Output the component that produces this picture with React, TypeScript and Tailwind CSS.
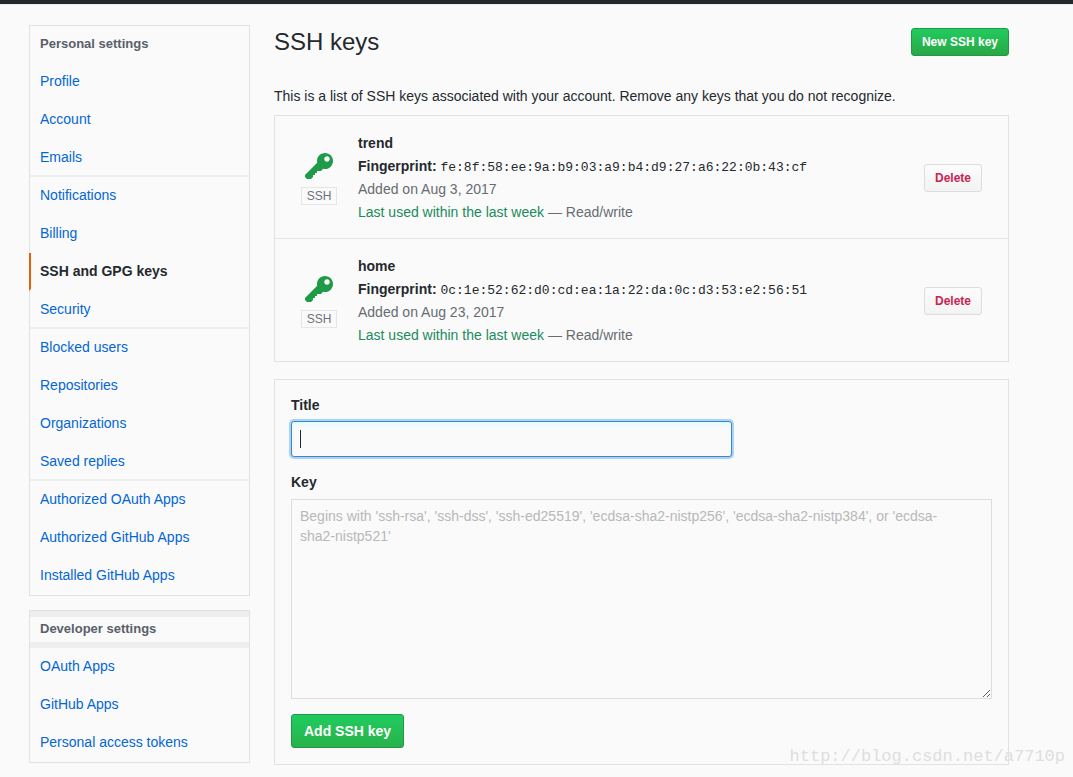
import { useState } from 'react';
import clsx from 'clsx';

interface NavItem {
  label: string;
  selected?: boolean;
  divided?: boolean;
}

interface SshKey {
  title: string;
  fingerprint: string;
  added: string;
}

const personalItems: NavItem[] = [
  { label: 'Profile' },
  { label: 'Account' },
  { label: 'Emails', divided: true },
  { label: 'Notifications' },
  { label: 'Billing' },
  { label: 'SSH and GPG keys', selected: true },
  { label: 'Security', divided: true },
  { label: 'Blocked users' },
  { label: 'Repositories' },
  { label: 'Organizations' },
  { label: 'Saved replies', divided: true },
  { label: 'Authorized OAuth Apps' },
  { label: 'Authorized GitHub Apps' },
  { label: 'Installed GitHub Apps' },
];

const developerItems: NavItem[] = [
  { label: 'OAuth Apps' },
  { label: 'GitHub Apps' },
  { label: 'Personal access tokens' },
];

const sshKeys: SshKey[] = [
  {
    title: 'trend',
    fingerprint: 'fe:8f:58:ee:9a:b9:03:a9:b4:d9:27:a6:22:0b:43:cf',
    added: 'Aug 3, 2017',
  },
  {
    title: 'home',
    fingerprint: '0c:1e:52:62:d0:cd:ea:1a:22:da:0c:d3:53:e2:56:51',
    added: 'Aug 23, 2017',
  },
];

function KeyIcon() {
  return (
    <svg viewBox="0 0 14 16" className="h-8 w-7" fill="#1f9a47" aria-hidden="true">
      <path
        fillRule="evenodd"
        d="M12.83 2.17C12.08 1.42 11.14 1.03 10 1c-1.13.03-2.08.42-2.83 1.17S6.04 3.86 6.01 5c0 .3.03.59.09.89L0 12v1l1 1h2l1-1v-1h1v-1h1v-1h2l1.09-1.11c.3.08.59.11.91.11 1.14-.03 2.08-.42 2.83-1.17S13.97 6.14 14 5c-.03-1.14-.42-2.08-1.17-2.83zM11 5.38c-.77 0-1.38-.61-1.38-1.38 0-.77.61-1.38 1.38-1.38.77 0 1.38.61 1.38 1.38 0 .77-.61 1.38-1.38 1.38z"
      />
    </svg>
  );
}

function Menu({ heading, items, banded }: { heading: string; items: NavItem[]; banded?: boolean }) {
  return (
    <nav aria-label={heading} className="border border-[#e2e2e2]">
      <h3
        className={clsx(
          'flex h-[37px] items-center px-2.5 text-[13px] font-bold text-[#586069]',
          banded && 'border-y-[6px] border-[#eeeeee]',
        )}
      >
        {heading}
      </h3>
      {items.map(item => (
        <a
          key={item.label}
          href="#"
          className={clsx(
            'flex h-[38px] items-center border-b-2 px-2.5',
            item.divided ? 'border-b-[#eeeeee]' : 'border-b-transparent',
            item.selected
              ? '-ml-px border-l-2 border-l-[#e36209] pl-[9px] font-bold text-[#24292e]'
              : 'text-[#0366d6] hover:underline',
          )}
        >
          {item.label}
        </a>
      ))}
    </nav>
  );
}

function KeyRow({ item }: { item: SshKey }) {
  return (
    <li className="flex items-center pt-4 pr-[26px] pb-[14px] pl-[26px]">
      <div className="flex w-9 flex-col items-center gap-1">
        <KeyIcon />
        <span className="w-full border border-[#e6e6e6] text-center text-xs leading-4 text-[#6a737d]">
          SSH
        </span>
      </div>
      <div className="ml-[21px] flex-1 leading-[23px] text-[#666c72]">
        <strong className="block text-[#24292e]">{item.title}</strong>
        <div className="text-[#24292e]">
          <strong>Fingerprint:</strong>{' '}
          <code className="font-['Liberation_Mono',monospace] text-[13px] leading-none">
            {item.fingerprint}
          </code>
        </div>
        <div>Added on {item.added}</div>
        <div>
          <span className="text-[#218a5b]">Last used within the last week</span> — Read/write
        </div>
      </div>
      <button
        type="button"
        className="h-7 rounded-[3px] border border-[#dddddd] bg-linear-to-b from-[#fcfcfc] to-[#f3f3f3] px-2.5 text-xs font-bold text-[#cb2450]"
      >
        Delete
      </button>
    </li>
  );
}

export default function App() {
  const [title, setTitle] = useState('');
  const [key, setKey] = useState('');

  return (
    <div className="relative min-h-screen border-t-4 border-[#24282b] bg-[#fafafa] font-['Liberation_Sans',Arial,sans-serif] text-sm text-[#24292e]">
      <div className="flex gap-6 border-t border-[#eeeeee] pt-5 pr-16 pl-[29px]">
        <aside className="flex w-[221px] shrink-0 flex-col gap-[14px]">
          <Menu heading="Personal settings" items={personalItems} />
          <Menu heading="Developer settings" items={developerItems} banded />
        </aside>

        <main className="min-w-0 flex-1">
          <div className="flex h-[34px] items-center justify-between">
            <h1 className="text-2xl">SSH keys</h1>
            <button
              type="button"
              className="h-7 rounded-[3px] border border-[#25954a] bg-linear-to-b from-[#1fcc5f] to-[#28a745] px-2.5 text-xs font-bold text-white"
            >
              New SSH key
            </button>
          </div>
          <p className="mt-[27px] leading-5">
            This is a list of SSH keys associated with your account. Remove any keys that you do not
            recognize.
          </p>

          <ul className="mt-[9px] divide-y divide-[#e4e4e4] border border-[#e2e2e2]">
            {sshKeys.map(item => (
              <KeyRow key={item.title} item={item} />
            ))}
          </ul>

          <form
            className="mt-[17px] border border-[#e2e2e2] p-4"
            onSubmit={event => event.preventDefault()}
          >
            <label htmlFor="key-title" className="block leading-[18px] font-bold">
              Title
            </label>
            <div className="relative mt-[7px] w-[441px] max-w-full">
              <input
                id="key-title"
                autoFocus
                value={title}
                onChange={event => setTitle(event.target.value)}
                className="block h-9 w-full rounded-[3px] border border-[#3f86c4] bg-[#fafafa] px-2 text-base caret-transparent shadow-[inset_0_4px_3px_#e6fbff,0_0_0_2px_#a9d4f8] outline-none"
              />
              {/* caret */}
              {title === '' && (
                <span className="pointer-events-none absolute top-[9px] left-[9px] h-[18px] w-px bg-[#24292e]" />
              )}
            </div>
            <label htmlFor="key-text" className="mt-4 block leading-[18px] font-bold">
              Key
            </label>
            <textarea
              id="key-text"
              value={key}
              onChange={event => setKey(event.target.value)}
              placeholder="Begins with 'ssh-rsa', 'ssh-dss', 'ssh-ed25519', 'ecdsa-sha2-nistp256', 'ecdsa-sha2-nistp384', or 'ecdsa-sha2-nistp521'"
              className="mt-2 block h-[200px] w-full border border-[#dedede] bg-[#fafafa] py-1.5 pr-8 pl-2 leading-5 placeholder:text-[#b8b8b8]"
            />
            <button
              type="submit"
              className="mt-[15px] block h-[34px] rounded-[3px] border border-[#25954a] bg-linear-to-b from-[#1fcc5f] to-[#28b24a] px-3 font-bold text-white"
            >
              Add SSH key
            </button>
          </form>
        </main>
      </div>
      <span className="absolute right-2 bottom-2 font-['Liberation_Mono',monospace] text-[17px] text-[#dedede]">
        http://blog.csdn.net/a7710p
      </span>
    </div>
  );
}
